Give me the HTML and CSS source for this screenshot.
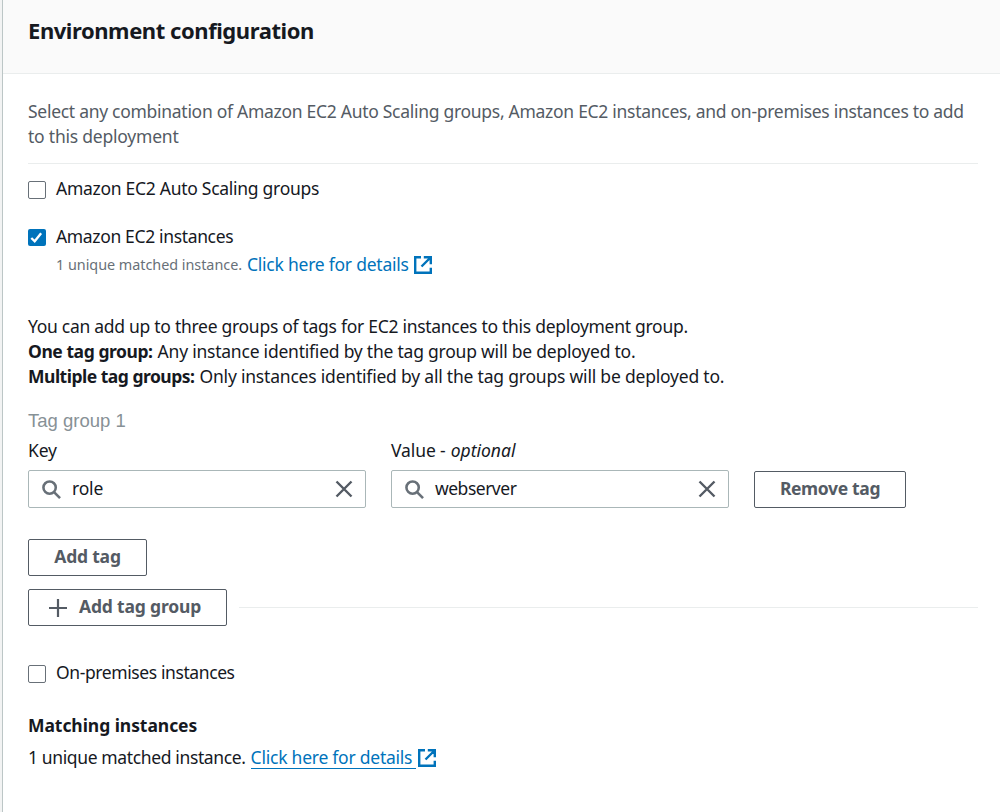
FILE: index.html
```html
<!DOCTYPE html>
<html lang="en">
<head>
<meta charset="utf-8">
<title>Environment configuration</title>
<link rel="stylesheet" href="styles.css">
</head>
<body>
<main class="panel">
  <header class="panel-header"><h1><span class="t-title">Environment configuration</span></h1></header>
  <div class="panel-body">
    <p class="description"><span class="t-desc1">Select any combination of Amazon EC2 Auto Scaling groups, Amazon EC2 instances, and on-premises instances to add</span><br><span class="t-desc2">to this deployment</span></p>
    <label class="check-row asg"><span class="box"></span><span class="t-asg">Amazon EC2 Auto Scaling groups</span></label>
    <label class="check-row ec2"><span class="box checked"><svg viewBox="0 0 18 18"><path d="M3.500 9.500l3.600 3.500 6.800-8.500"/></svg></span><span class="t-ec2">Amazon EC2 instances</span></label>
    <div class="match-note"><span class="small t-small">1 unique matched instance.</span><a class="link"><span class="t-link">Click here for details</span><svg class="external" viewBox="0 0 18 18"><path d="M7 1.200H1.200v15.600h15.600v-5M9.800 1.200h7v7M16.500 1.500L7.500 10.500"/></svg></a></div>
    <div class="help">
      <p><span class="t-help1">You can add up to three groups of tags for EC2 instances to this deployment group.</span></p>
      <p><b class="t-one">One tag group:</b><span class="t-help2">Any instance identified by the tag group will be deployed to.</span></p>
      <p><b class="t-multi">Multiple tag groups:</b><span class="t-help3">Only instances identified by all the tag groups will be deployed to.</span></p>
    </div>
    <h2 class="group-title"><span class="t-group">Tag group 1</span></h2>
    <div class="tag-fields">
      <div class="field"><div class="label"><span class="t-key">Key</span></div>
        <div class="input"><svg class="search" viewBox="0 0 20 20"><circle cx="8" cy="8" r="6.500"/><path d="M12.700 12.700L19 19"/></svg><span class="value t-role">role</span><svg class="clear" viewBox="0 0 18 18"><path d="M1.500 1.500l15 15M16.500 1.500l-15 15"/></svg></div></div>
      <div class="field"><div class="label"><span class="t-value">Value -</span><i class="t-optional">optional</i></div>
        <div class="input"><svg class="search" viewBox="0 0 20 20"><circle cx="8" cy="8" r="6.500"/><path d="M12.700 12.700L19 19"/></svg><span class="value t-web">webserver</span><svg class="clear" viewBox="0 0 18 18"><path d="M1.500 1.500l15 15M16.500 1.500l-15 15"/></svg></div></div>
      <button class="button remove"><span class="t-remove">Remove tag</span></button>
    </div>
    <button class="button add"><span class="t-add">Add tag</span></button>
    <div class="group-actions"><button class="button add-group"><svg class="plus" viewBox="0 0 18 18"><path d="M9 0v18M0 9h18"/></svg><span class="t-addgroup">Add tag group</span></button><div class="rule"></div></div>
    <label class="check-row premises"><span class="box"></span><span class="t-prem">On-premises instances</span></label>
    <h3 class="matching"><span class="t-match">Matching instances</span></h3>
    <div class="match-result"><span class="t-result">1 unique matched instance.</span><a class="link underlined"><span class="t-link2">Click here for details</span><svg class="external" viewBox="0 0 18 18"><path d="M7 1.200H1.200v15.600h15.600v-5M9.800 1.200h7v7M16.500 1.500L7.500 10.500"/></svg></a></div>
  </div>
</main>
</body>
</html>
```
FILE: styles.css
```css
* { box-sizing: border-box; }
body { margin: 0; background: #f2f3f3; color: #16191f; font: 17.5px/25px "Noto Sans", sans-serif; }
h1, h2, h3, p { margin: 0; font-size: inherit; font-weight: inherit; }
span, b, i { white-space: nowrap; }
svg { display: block; flex: none; fill: none; stroke: currentColor; }
.panel { height: 812px; margin-left: 2px; border-left: 1px solid #bcc6c6; background: #fff; overflow: hidden; }
.panel-header { height: 74px; padding: 15px 25px; background: #fafafa; border-bottom: 1px solid #eaeded; }
.panel-header h1 { font-size: 22px; line-height: 30px; font-weight: 700; }
.panel-body { padding: 25px 22px 0 25px; }
.description { height: 65px; border-bottom: 1px solid #eaeded; color: #545b64; }
.check-row { display: flex; align-items: flex-start; gap: 10px; height: 25px; line-height: 23px; }
.asg { margin-top: 13px; }
.ec2 { margin-top: 23px; }
.premises { margin-top: 35px; }
.box { width: 18px; height: 18px; margin-top: 4px; border: 1px solid #687078; border-radius: 2px; }
.checked { height: 17px; border: 0; background: #0073bb; color: #fff; }
.checked svg { height: 17px; stroke-width: 2.5; }
.match-note { display: flex; align-items: center; height: 25px; margin: 2px 0 0 28px; gap: 5px; }
.small { width: 186px; color: #687078; font-size: 14.4px; }
.link { display: flex; align-items: center; gap: 5px; color: #0073bb; line-height: 23px; }
.match-note .t-link { padding-bottom: 1px; }
.external { width: 18px; height: 18px; stroke-width: 2.4; }
.help { margin-top: 38px; }
.help p, .label { display: flex; gap: 5px; height: 25px; line-height: 23px; }
.group-title { margin-top: 18px; font: 18.5px/25px "Liberation Sans", sans-serif; color: #879196; }
.tag-fields { display: flex; align-items: flex-end; gap: 25px; margin-top: 6px; }
.field { width: 338px; }
.input { display: flex; align-items: center; height: 38px; margin-top: 6px; padding: 0 13px; border: 1px solid #aab7b8; border-radius: 2px; }
.value { flex: 1; padding-bottom: 2px; }
.search, .clear { color: #687078; stroke-width: 2.7; }
.search { width: 19px; height: 19px; margin-right: 11px; }
.clear { width: 18px; height: 18px; color: #545b64; stroke-width: 2.4; margin-right: -1px; }
.button { display: flex; align-items: center; justify-content: center; height: 37px; padding: 0 0 2px; border: 1px solid #545b64; border-radius: 2px; background: #fff; color: #545b64; font: 700 17.5px/23px "Noto Sans", sans-serif; }
.remove { width: 152px; }
.add { width: 119px; margin-top: 31px; }
.group-actions { display: flex; align-items: center; gap: 12px; margin-top: 13px; }
.add-group { width: 199px; gap: 12px; justify-content: flex-start; padding-left: 20px; }
.plus { width: 18px; height: 18px; margin-top: 2px; stroke-width: 2.2; }
.rule { flex: 1; height: 1px; background: #eaeded; }
.matching { margin-top: 27px; font-weight: 700; }
.match-result { display: flex; gap: 5px; height: 25px; margin-top: 8px; line-height: 23px; }
.match-result .link { align-items: flex-start; gap: 2px; }
.match-result .external { margin-top: 3px; }
.t-link2 { height: 23px; padding-right: 4px; border-bottom: 1px solid #0073bb; }

/* Tracking per text run */
.t-title { letter-spacing: -.44px; }
.t-desc1 { letter-spacing: -.286px; }
.t-desc2 { letter-spacing: -.22px; }
.t-asg { letter-spacing: -.28px; }
.t-ec2 { letter-spacing: -.35px; }
.t-small { letter-spacing: -.03px; }
.t-link, .t-link2 { letter-spacing: -.24px; }
.t-help1 { letter-spacing: -.285px; }
.t-one { letter-spacing: -.44px; }
.t-help2 { letter-spacing: -.225px; }
.t-multi { letter-spacing: -.5px; }
.t-help3 { letter-spacing: -.205px; }
.t-key, .t-role, .t-add { letter-spacing: -.2px; }
.t-addgroup { letter-spacing: -.17px; }
.t-value { letter-spacing: -.1px; }
.t-match { letter-spacing: -.06px; }
.t-web { letter-spacing: -.5px; }
.t-remove { letter-spacing: -.35px; }
.t-prem { letter-spacing: -.4px; }
.t-result { letter-spacing: -.37px; }
```
